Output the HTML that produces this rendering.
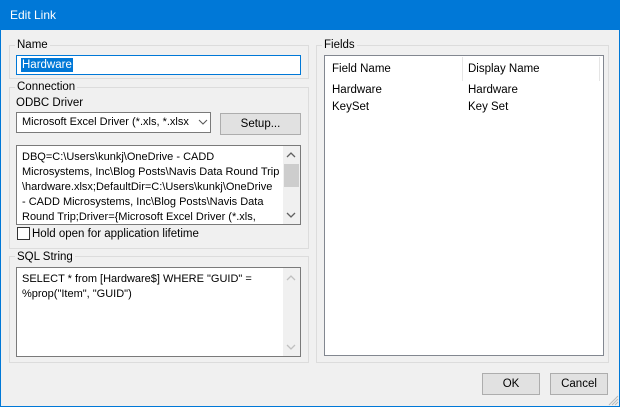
<!DOCTYPE html>
<html><head><style>
*{box-sizing:border-box;margin:0;padding:0}
body{width:620px;height:407px;background:#f0f0f0;font-family:"Liberation Sans",sans-serif;font-size:11.5px;color:#000;position:relative;overflow:hidden}
.a{position:absolute}
.win{left:0;top:0;width:620px;height:407px;border:1px solid #0078d7;border-top:none}
.title{left:0;top:0;width:620px;height:30px;background:#0078d7;color:#fff;font-size:12px;padding:8px 0 0 10px}
.grp{border:1px solid #dcdcdc}
.lg{background:#f0f0f0;padding:0 2px;line-height:13px}
.box{background:#fff;border:1px solid #7a7a7a}
.btn{background:#e1e1e1;border:1px solid #adadad;text-align:center;line-height:20px}
.sb{background:#f0f0f0}
.ta{line-height:15px;padding:4px 0 0 5px;white-space:nowrap;font-size:11px;overflow:hidden}
</style></head><body>
<div class="a title">Edit Link</div>
<div class="a win"></div>

<div class="a grp" style="left:9px;top:45px;width:300px;height:34px"></div>
<div class="a lg" style="left:15px;top:39px">Name</div>
<div class="a box" style="left:16px;top:55px;width:285px;height:20px;border-color:#0078d7"></div>
<div class="a" style="left:21px;top:58px;height:14px;background:#0078d7;color:#fff;line-height:14px;padding:0 1px">Hardware</div>

<div class="a grp" style="left:9px;top:87px;width:300px;height:162px"></div>
<div class="a lg" style="left:15px;top:81px">Connection</div>
<div class="a" style="left:16px;top:97px">ODBC Driver</div>
<div class="a box" style="left:16px;top:112px;width:195px;height:21px;padding:3px 0 0 5px;white-space:nowrap;overflow:hidden;font-size:11px"><span style="display:inline-block;width:170px;overflow:hidden">Microsoft Excel Driver (*.xls, *.xlsx</span></div>
<svg class="a" style="left:198px;top:118px" width="10" height="8"><path d="M1 2l4 4 4-4" fill="none" stroke="#555"/></svg>
<div class="a btn" style="left:220px;top:113px;width:81px;height:22px">Setup...</div>
<div class="a box ta" style="left:16px;top:145px;width:285px;height:80px">DBQ=C:\Users\kunkj\OneDrive - CADD<br>Microsystems, Inc\Blog Posts\Navis Data Round Trip<br>\hardware.xlsx;DefaultDir=C:\Users\kunkj\OneDrive<br>- CADD Microsystems, Inc\Blog Posts\Navis Data<br>Round Trip;Driver={Microsoft Excel Driver (*.xls,</div>
<div class="a sb" style="left:283px;top:146px;width:17px;height:78px"></div>
<div class="a" style="left:284px;top:164px;width:15px;height:23px;background:#cdcdcd"></div>
<svg class="a" style="left:286px;top:151px" width="10" height="8"><path d="M1 6l4-4 4 4" fill="none" stroke="#606060" stroke-width="1.3"/></svg>
<svg class="a" style="left:286px;top:211px" width="10" height="8"><path d="M1 2l4 4 4-4" fill="none" stroke="#606060" stroke-width="1.3"/></svg>
<div class="a" style="left:17px;top:227px;width:13px;height:13px;border:1px solid #333;background:#fff"></div>
<div class="a" style="left:32px;top:228px">Hold open for application lifetime</div>

<div class="a grp" style="left:9px;top:256px;width:300px;height:107px"></div>
<div class="a lg" style="left:15px;top:251px">SQL String</div>
<div class="a box ta" style="left:16px;top:267px;width:285px;height:90px">SELECT * from [Hardware$] WHERE "GUID" =<br>%prop("Item", "GUID")</div>
<div class="a sb" style="left:283px;top:268px;width:17px;height:88px"></div>
<svg class="a" style="left:286px;top:274px" width="10" height="8"><path d="M1 6l4-4 4 4" fill="none" stroke="#c0c0c0" stroke-width="1.3"/></svg>
<svg class="a" style="left:286px;top:343px" width="10" height="8"><path d="M1 2l4 4 4-4" fill="none" stroke="#c0c0c0" stroke-width="1.3"/></svg>

<div class="a grp" style="left:316px;top:45px;width:293px;height:318px"></div>
<div class="a lg" style="left:322px;top:39px">Fields</div>
<div class="a box" style="left:324px;top:55px;width:280px;height:301px;border-color:#828790"></div>
<div class="a" style="left:462px;top:57px;width:1px;height:24px;background:#e5e5e5"></div>
<div class="a" style="left:599px;top:57px;width:1px;height:24px;background:#e5e5e5"></div>
<div class="a" style="left:332px;top:63px">Field Name</div>
<div class="a" style="left:468px;top:63px">Display Name</div>
<div class="a" style="left:332px;top:84px">Hardware</div>
<div class="a" style="left:468px;top:84px">Hardware</div>
<div class="a" style="left:332px;top:101px">KeySet</div>
<div class="a" style="left:468px;top:101px">Key Set</div>

<div class="a btn" style="left:482px;top:373px;width:58px;height:22px">OK</div>
<div class="a btn" style="left:550px;top:373px;width:58px;height:22px">Cancel</div>
<svg class="a" style="left:607px;top:394px" width="12" height="12"><path d="M11 2L2 11M11 5L5 11M11 8L8 11" stroke="#bbb"/></svg>
</body></html>
